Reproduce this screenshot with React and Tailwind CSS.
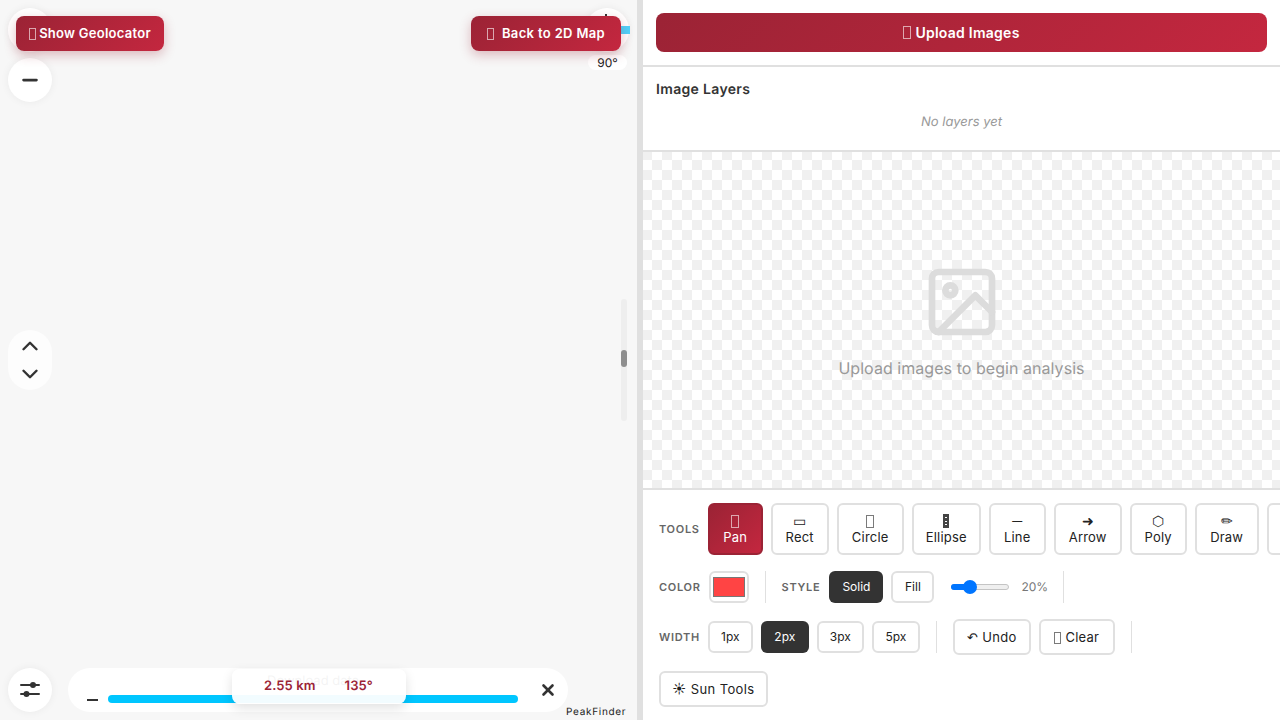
import React from 'react';
import { Minus, Plus, ChevronUp, ChevronDown, X } from 'lucide-react';

const gradient = 'bg-[linear-gradient(135deg,#9b2335,#c4273f)]';

// emoji in the original have no glyph, they show up as an empty box
const Tofu = ({ className = '' }) => (
    <span className={`inline-block h-[12px] w-[7px] border border-current opacity-60 ${className}`} />
);

const EllipseGlyph = () => (
    <span className="flex h-[14px] w-[6px] flex-col items-center justify-evenly bg-[#444]">
        <span className="h-px w-0.5 bg-white" />
        <span className="h-px w-0.5 bg-white" />
        <span className="h-px w-0.5 bg-white" />
    </span>
);

const tools = [
    { icon: <Tofu className="h-[13px] w-[8px]" />, label: 'Pan', active: true, cls: 'w-[55px]' },
    { icon: '▭', label: 'Rect', cls: 'w-[58px]' },
    { icon: <Tofu className="h-[13px] w-[8px]" />, label: 'Circle', cls: 'w-[67px]' },
    { icon: <EllipseGlyph />, label: 'Ellipse', cls: 'w-[69px]' },
    { icon: '─', label: 'Line', cls: 'w-[57px]' },
    { icon: '➜', label: 'Arrow', cls: 'w-[68px]' },
    { icon: '⬡', label: 'Poly', cls: 'w-[57px]' },
    { icon: '✏', label: 'Draw', cls: 'w-[64px]' },
    { icon: '⌖', label: 'Text', cls: 'w-[58px]' },
];

const widths = [
    { label: '1px', cls: 'w-[45px]' },
    { label: '2px', cls: 'w-[48px]', active: true },
    { label: '3px', cls: 'w-[47px]' },
    { label: '5px', cls: 'w-[48px]' },
];

const Label = ({ children, className = '' }) => (
    <span className={`text-[11px] font-semibold tracking-[0.7px] text-[#666] ${className}`}>{children}</span>
);

const Round = ({ children, className = '' }) => (
    <div className={`absolute left-2 flex h-11 w-11 items-center justify-center rounded-full bg-white text-[#333] shadow-[0_0_8px_rgba(0,0,0,0.06)] ${className}`}>
        {children}
    </div>
);

const MapPane = () => (
    <div className="relative h-full w-[637px] shrink-0 overflow-hidden bg-[#f7f7f7]">
        <Round className="top-2"><Plus size={22} strokeWidth={3} /></Round>
        <Round className="top-[58px]"><Minus size={22} strokeWidth={3} /></Round>

        <button className={`absolute left-4 top-4 flex h-[35px] w-[148px] items-center justify-center gap-[3px] rounded-lg pt-px text-[13px] font-semibold tracking-[0.27px] text-white shadow-[0_4px_12px_rgba(155,35,53,0.3)] ${gradient}`}>
            <Tofu />
            <span>Show Geolocator</span>
        </button>

        <div className="absolute left-[585px] top-2 h-11 w-11 rounded-full bg-white shadow-[0_0_8px_rgba(0,0,0,0.06)]">
            <div className="absolute left-[20px] top-[6px] h-1.5 w-0.5 bg-[#333]" />
        </div>
        <div className="absolute left-[621px] top-[26px] h-2 w-[9px] bg-[#4fd2fb]" />
        <div className="absolute left-[588px] top-[55px] flex h-[15px] w-[39px] items-center justify-center rounded-lg bg-white text-xs text-[#222]">
            90°
        </div>
        <button className={`absolute left-[471px] top-4 flex h-[35px] w-[150px] items-center justify-center gap-[8px] rounded-lg pt-px text-[13px] font-semibold tracking-[0.35px] text-white shadow-[0_4px_12px_rgba(155,35,53,0.3)] ${gradient}`}>
            <Tofu />
            <span>Back to 2D Map</span>
        </button>

        <div className="absolute left-2 top-[330px] flex h-[60px] w-11 flex-col items-center justify-between rounded-[22px] bg-white/70 py-[3px] text-[#333]">
            <ChevronUp size={26} strokeWidth={2.25} />
            <ChevronDown size={26} strokeWidth={2.25} />
        </div>

        <div className="absolute left-[621px] top-[299px] h-[122px] w-1.5 rounded-full bg-[#eeeeee]">
            <div className="absolute left-0 top-[51px] h-[17px] w-1.5 rounded-sm bg-[#8e8e8e]" />
        </div>

        <Round className="top-[668px]">
            <svg width="24" height="24" viewBox="0 0 24 24" fill="#333" stroke="#333" strokeWidth="2" strokeLinecap="round">
                <path d="M3 7h18M3 16h18" />
                <circle cx="15" cy="7" r="2" />
                <circle cx="8.5" cy="16" r="2" />
            </svg>
        </Round>

        <div className="absolute left-[68px] top-[668px] h-11 w-[500px] rounded-[22px] bg-white">
            <div className="absolute left-[19px] top-[31px] h-0.5 w-[11px] bg-[#333]" />
            <div className="absolute left-[40px] top-[27px] h-2 w-[410px] rounded-full bg-[#00c6ff]" />
            <div className="absolute left-[199px] top-[4px] text-[13px] text-[#222]">Download data</div>
            <X size={18} strokeWidth={3.5} className="absolute left-[471px] top-[13px] text-[#333]" />
        </div>

        <div className="absolute left-[232px] top-[669px] flex h-[35px] w-[174px] items-start gap-[29px] rounded-lg bg-white/95 pl-8 pt-[8px] text-[13px] font-semibold tracking-[0.1px] text-[#9b2335] shadow-[0_4px_12px_rgba(0,0,0,0.12)]">
            <span>2.55 km</span>
            <span>135°</span>
        </div>

        <div className="absolute left-[566px] top-[705px] text-[10px] tracking-[0.7px] text-[#222]">PeakFinder</div>
    </div>
);

const Toolbar = () => (
    <div className="flex flex-col overflow-hidden border-t-2 border-[#e0e0e0] bg-white pl-4 pt-[13px]">
        <div className="flex items-center">
            <Label className="mr-2">TOOLS</Label>
            <div className="flex shrink-0 gap-2">
                {tools.map((t) => (
                    <button
                        key={t.label}
                        className={`flex h-[52px] flex-col items-center justify-center whitespace-nowrap rounded-md border-2 text-[13px] leading-4 tracking-[0.2px] ${t.cls} ${t.active ? `border-[#9b2335] text-white ${gradient}` : 'border-[#e0e0e0] bg-white text-[#222]'}`}
                    >
                        <span className="flex h-[15px] items-center text-sm leading-[14px]">{t.icon}</span>
                        <span>{t.label}</span>
                    </button>
                ))}
            </div>
        </div>

        <div className="mt-4 flex h-8 items-center">
            <Label className="mr-2">COLOR</Label>
            <div className="flex h-8 w-10 items-center justify-center rounded-md border-2 border-[#e0e0e0]">
                <div className="h-[20px] w-8 border border-[#777] bg-[#ff4444]" />
            </div>
            <div className="mx-4 h-8 w-px bg-[#e0e0e0]" />
            <Label className="mr-[9px]">STYLE</Label>
            <button className="h-8 w-[54px] rounded-md bg-[#333] text-xs text-white">Solid</button>
            <button className="ml-2 h-8 w-[43px] rounded-md border-2 border-[#e0e0e0] text-xs text-[#222]">Fill</button>
            <div className="relative ml-[17px] h-1.5 w-[58px] rounded-full border border-[#c4c4c4] bg-[#efefef]">
                <div className="absolute -left-px -top-px h-1.5 w-4 rounded-l-full bg-[#0075ff]" />
                <div className="absolute left-[8px] top-[-5px] ml-[3px] h-3.5 w-3.5 rounded-full bg-[#0075ff]" />
            </div>
            <span className="ml-[12px] text-xs text-[#777]">20%</span>
            <div className="ml-[15px] h-8 w-px bg-[#e0e0e0]" />
        </div>

        <div className="mt-[18px] flex h-8 items-center">
            <Label className="mr-2">WIDTH</Label>
            <div className="flex gap-2">
                {widths.map((w) => (
                    <button
                        key={w.label}
                        className={`h-8 rounded-md text-xs ${w.cls} ${w.active ? 'bg-[#333] text-white' : 'border-2 border-[#e0e0e0] text-[#222]'}`}
                    >
                        {w.label}
                    </button>
                ))}
            </div>
            <div className="mx-4 h-8 w-px bg-[#e0e0e0]" />
            <button className="h-[36px] w-[78px] rounded-md border-2 border-[#e0e0e0] pt-px text-[13px] tracking-[0.25px] text-[#222]">↶ Undo</button>
            <button className="ml-2 flex h-[36px] w-[76px] items-center justify-center gap-1 rounded-md border-2 border-[#e0e0e0] pt-px text-[13px] tracking-[0.25px] text-[#222]"><Tofu />Clear</button>
            <div className="ml-4 h-8 w-px bg-[#e0e0e0]" />
        </div>

        <button className="mt-[18px] h-[36px] w-[109px] rounded-md border-2 border-[#e0e0e0] pt-px text-[13px] tracking-[0.4px] text-[#222]">☀ Sun Tools</button>
    </div>
);

export default function App() {
    return (
        <div className="flex h-[720px] w-[1280px] overflow-hidden bg-white font-['Inter',sans-serif] [text-rendering:geometricPrecision]">
            <MapPane />
            <div className="h-full w-1.5 shrink-0 bg-[#e0e0e0]" />
            <div className="flex h-full min-w-0 flex-1 flex-col">
                <div className="border-b-2 border-[#e0e0e0] p-[13px]">
                    <button className={`flex h-[39px] w-full items-center justify-center gap-1 rounded-lg text-sm font-semibold tracking-[0.25px] text-white ${gradient}`}><Tofu className="h-[13px] w-[8px]" />Upload Images</button>
                </div>
                <div className="h-[85px] border-b-2 border-[#e0e0e0] px-[13px] pt-[14px]">
                    <h3 className="text-sm font-semibold leading-[18px] tracking-[0.33px] text-[#333]">Image Layers</h3>
                    <p className="mt-[15px] text-center text-[13px] italic leading-4 text-[#999]">No layers yet</p>
                </div>
                <div className="flex h-[336px] shrink-0 flex-col items-center justify-center bg-[conic-gradient(#fff_25%,#f0f0f0_0_50%,#fff_0_75%,#f0f0f0_0)] bg-[length:20px_20px] bg-[position:-1px_-2px] pt-[2px] text-[#999]">
                    <svg width="80" height="80" viewBox="0 0 24 24" fill="none" stroke="#dcdcdc" strokeWidth="2" strokeLinecap="round" strokeLinejoin="round">
                        <rect x="3" y="3" width="18" height="18" rx="2" />
                        <circle cx="8.5" cy="8.5" r="1.5" />
                        <polyline points="21 15 16 10 5 21" />
                    </svg>
                    <p className="mt-[14px] text-base tracking-[0.05px]">Upload images to begin analysis</p>
                </div>
                <Toolbar />
            </div>
        </div>
    );
}
